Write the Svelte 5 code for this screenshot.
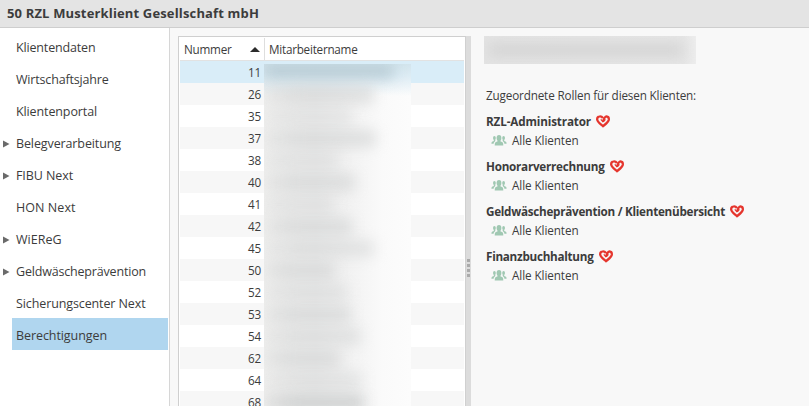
<script>
  const menu = [
    { label: 'Klientendaten', w: 79.5 },
    { label: 'Wirtschaftsjahre', w: 92.5 },
    { label: 'Klientenportal', w: 81 },
    { label: 'Belegverarbeitung', w: 105, sub: true },
    { label: 'FIBU Next', w: 57, sub: true },
    { label: 'HON Next', w: 59.5 },
    { label: 'WiEReG', w: 45.5, sub: true },
    { label: 'Geldwäscheprävention', w: 130, sub: true },
    { label: 'Sicherungscenter Next', w: 129.5 },
    { label: 'Berechtigungen', w: 91, active: true }
  ];
  // employee number, width of the obscured name, strength of its shade
  const rows = [
    [11, 130, 0.9], [26, 110, 0.6], [35, 88, 0.35], [37, 112, 0.6],
    [38, 74, 0.4], [40, 91, 0.6], [41, 70, 0.4], [42, 88, 0.6],
    [45, 110, 0.5], [50, 71, 0.6], [52, 83, 0.45], [53, 87, 0.6],
    [54, 97, 0.5], [62, 76, 0.6], [64, 98, 0.45], [68, 100, 0.95]
  ];
  const roles = [
    { name: 'RZL-Administrator', w: 105 },
    { name: 'Honorarverrechnung', w: 118.5 },
    { name: 'Geldwäscheprävention / Klientenübersicht', w: 239 },
    { name: 'Finanzbuchhaltung', w: 107.5 }
  ];

  // Tracks a label so that it takes exactly the given width.
  function fit(node, width) {
    const natural = node.getBoundingClientRect().width;
    const n = node.textContent.length;
    node.style.letterSpacing = (width - natural) / n + 'px';
  }
</script>

<div class="app">
  <header><span use:fit={252}>50 RZL Musterklient Gesellschaft mbH</span></header>
  <div class="body">
    <nav>
      {#each menu as m}
        <div class="item">
          <div class="arrow">
            {#if m.sub}
              <svg width="7" height="8" viewBox="0 0 7 8"><path d="M0 0.5 L6.5 4 L0 7.5 Z" fill="#6a6a6a" /></svg>
            {/if}
          </div>
          <div class="label" class:active={m.active}><span use:fit={m.w}>{m.label}</span></div>
        </div>
      {/each}
    </nav>

    <section class="grid">
      <div class="head">
        <div class="num-head">
          <span use:fit={47.5}>Nummer</span>
          <svg width="10" height="5" viewBox="0 0 10 5"><path d="M0 5 L5 0 L10 5 Z" fill="#2b2b2b" /></svg>
        </div>
        <div class="name-head"><span use:fit={88.5}>Mitarbeitername</span></div>
      </div>
      <div class="rows">
        {#each rows as r, i}
          <div class="row" class:selected={i === 0} class:odd={i % 2 === 1}>
            <span use:fit={13}>{r[0]}</span>
          </div>
        {/each}
        <div class="veil">
          {#each rows as r, i}
            <div class="ghost"><i class:blue={i === 0} style="width: {r[1]}px; opacity: {r[2]}"></i></div>
          {/each}
        </div>
      </div>
    </section>

    <div class="splitter"><b></b><b></b><b></b><b></b></div>

    <main>
      <div class="person"><i></i></div>
      <p><span use:fit={210}>Zugeordnete Rollen für diesen Klienten:</span></p>
      {#each roles as r}
        <div class="role">
          <div class="role-name">
            <span use:fit={r.w}>{r.name}</span>
            <svg width="14" height="13" viewBox="0 0 14 13" fill="none" stroke="#e5352d" stroke-width="2.3">
              <path d="M6.9 3 C6 1.7 4.9 1.2 3.6 1.4 C1.8 1.6 1 3 1.2 4.7 C1.5 7.2 4.6 9.2 7 11.2 C9.4 9.2 12.4 7.2 12.8 4.7 C13 3 12.2 1.6 10.5 1.4 C8.9 1.5 8 3 7 6.9" />
              <path d="M4.8 4.4 L6.8 6.6 L9.5 4.6" stroke-width="1.2" />
            </svg>
          </div>
          <div class="scope">
            <svg width="16" height="11" viewBox="0 0 16 11" fill="#a0c8b2">
              <ellipse cx="8" cy="3" rx="2.4" ry="3" />
              <path d="M6.6 5 H9.4 V6.3 L11.5 7.2 Q12.3 7.8 12.3 10.4 H3.7 Q3.7 7.8 4.5 7.2 L6.6 6.3 Z" />
              <ellipse cx="3.4" cy="3.1" rx="1.4" ry="2" />
              <path d="M2.8 4.6 H4.3 V6 L3.6 6.7 Q2.8 7.3 2.6 8.8 H0.4 Q0.4 7.2 1 6.8 L2.8 5.9 Z" />
              <ellipse cx="12.6" cy="3.1" rx="1.4" ry="2" />
              <path d="M13.2 4.6 H11.7 V6 L12.4 6.7 Q13.2 7.3 13.4 8.8 H15.6 Q15.6 7.2 15 6.8 L13.2 5.9 Z" />
            </svg>
            <span use:fit={66.5}>Alle Klienten</span>
          </div>
        </div>
      {/each}
    </main>
  </div>
</div>

<style>
  .app {
    width: 809px;
    height: 406px;
    overflow: hidden;
    display: flex;
    flex-direction: column;
    background: #f8f8f8;
    color: #3c3c3c;
    font-family: 'Open Sans', 'Noto Sans', sans-serif;
    font-size: 11.7px;
  }
  span { white-space: nowrap; display: inline-block; }
  svg { display: block; flex: none; }
  header {
    box-sizing: border-box;
    flex: 0 0 28px;
    padding-left: 7px;
    line-height: 26px;
    font-size: 13px;
    font-weight: 700;
    background: #e4e4e4;
    border-bottom: 1px solid #cecece;
  }
  .body { flex: 1; display: flex; min-height: 0; }
  nav {
    flex: 0 0 169px;
    padding-top: 2px;
    background: #fff;
    border-right: 1px solid #d6d6d6;
    font-size: 12.5px;
  }
  .item { display: flex; height: 32px; align-items: stretch; }
  .arrow { flex: 0 0 9px; padding: 14px 0 0 3px; }
  .label { box-sizing: border-box; width: 156px; height: 32px; padding: 2px 0 0 4px; line-height: 32px; }
  .label span { vertical-align: top; }
  .active { background: #b0d6ef; }
  .grid {
    box-sizing: border-box;
    flex: 0 0 287px;
    margin: 8px 0 0 8px;
    padding: 1px 1px 0;
    background: #fff;
    border: solid #cfcfcf;
    border-width: 1px 0 0 1px;
  }
  .head { display: flex; height: 22px; border-bottom: 1px solid #e2e2e2; line-height: 23px; }
  .num-head {
    box-sizing: border-box;
    width: 85px;
    padding: 0 4px;
    display: flex;
    align-items: center;
    justify-content: space-between;
    border-right: 1px solid #dedede;
  }
  .name-head { padding-left: 4px; }
  .rows { position: relative; }
  .row {
    box-sizing: border-box;
    height: 22px;
    padding-right: 203px;
    line-height: 23px;
    text-align: right;
  }
  .odd { background: #f7f7f7; }
  .selected { background: #d9edf8; }
  .veil {
    position: absolute;
    left: 84px;
    top: 3px;
    width: 147px;
    height: 349px;
    overflow: hidden;
    background:
      linear-gradient(180deg, rgba(203, 224, 234, 0.85) 0, rgba(210, 231, 242, 0.75) 12px, rgba(225, 239, 246, 0) 32px),
      linear-gradient(90deg, #efefee 0, #ebebeb 35%, #f1f1f1 55%, #fafafa 80%, #fcfcfc 100%);
  }
  .ghost { height: 22px; display: flex; align-items: flex-start; }
  .ghost i {
    display: block;
    height: 17px;
    margin-top: 0;
    background: linear-gradient(90deg, rgba(205, 206, 206, 0.4), #cfd1d1 30%);
    filter: blur(7px);
  }
  .ghost i.blue { height: 14px; background: #b4c8d1; }
  .splitter {
    box-sizing: border-box;
    flex: 0 0 6px;
    margin-top: 8px;
    padding-top: 223px;
    background: #dcdcdc;
    border-left: 1px solid #d0d0d0;
    display: flex;
    flex-direction: column;
    align-items: center;
    gap: 2px;
  }
  .splitter b { width: 3px; height: 3px; background: #aaa; }
  main { padding: 8px 0 0 15px; }
  .person {
    width: 212px;
    height: 28px;
    margin-left: -2px;
    overflow: hidden;
    background: linear-gradient(90deg, #e4e4e4, #e6e6e6 94%, #ededed);
  }
  .person i { display: block; width: 195px; height: 12px; margin: 8px 4px; background: #d2d2d2; filter: blur(7px); }
  p { margin: 22px 0 8px; line-height: 18px; }
  .role { height: 45px; }
  .role-name { display: flex; align-items: center; gap: 5px; height: 18px; font-weight: 700; }
  .role-name svg { margin-top: 1px; }
  .scope { display: flex; align-items: center; height: 20px; padding-left: 5px; gap: 5px; }
</style>
